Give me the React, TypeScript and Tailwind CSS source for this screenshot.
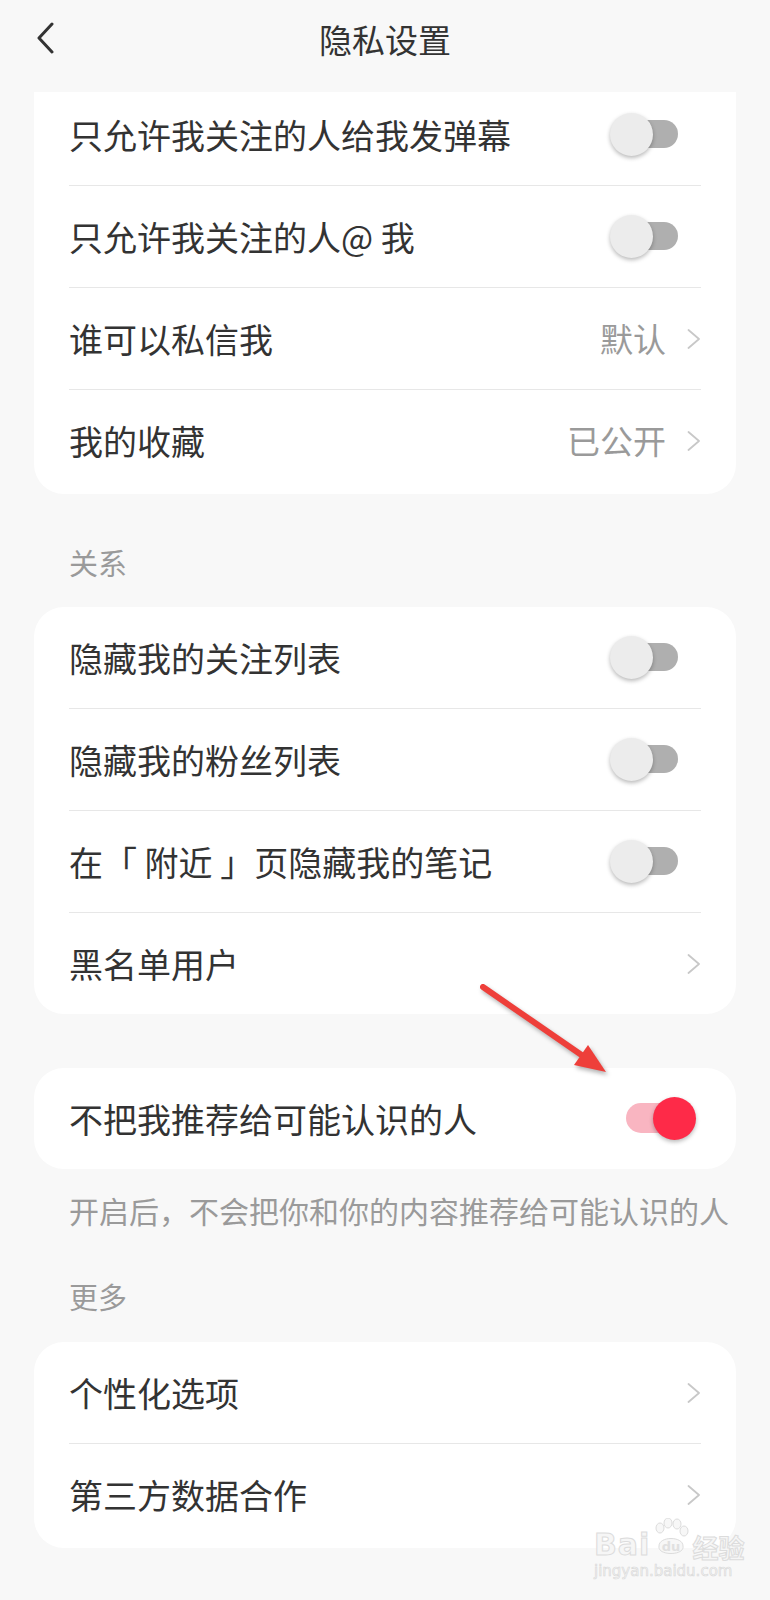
import React from "react";

type Row = {
  label: string;
  toggle?: boolean;
  on?: boolean;
  value?: string;
  link?: boolean;
};

const font = "font-['Noto_Sans_CJK_SC','Noto_Sans',sans-serif]";

function Switch({ on }: { on?: boolean }) {
  return (
    <div className="relative h-[43px] w-[86px] shrink-0">
      {on ? (
        <>
          <div className="absolute left-[16px] top-[6px] h-[30px] w-[60px] rounded-full bg-[#f9b5c1]" />
          <div className="absolute left-[43px] top-0 h-[43px] w-[43px] rounded-full bg-[#fe2a48] shadow-[0_2px_4px_rgba(0,0,0,0.28)]" />
        </>
      ) : (
        <>
          <div className="absolute left-[8px] top-[7px] h-[28px] w-[60px] rounded-full bg-[#afafaf]" />
          <div className="absolute left-0 top-0 h-[43px] w-[43px] rounded-full bg-[#ececec] shadow-[0_2px_4px_rgba(0,0,0,0.28)]" />
        </>
      )}
    </div>
  );
}

function Chevron() {
  return (
    <svg width="14" height="20" viewBox="0 0 14 20" className="shrink-0">
      <polyline
        points="1.5,1 12,10 1.5,19"
        fill="none"
        stroke="#c8c8c8"
        strokeWidth="1.8"
        strokeLinecap="round"
        strokeLinejoin="round"
      />
    </svg>
  );
}

function SettingRow({ row, className = "h-[101px]" }: { row: Row; className?: string }) {
  return (
    <div
      className={`flex items-center justify-between pl-[35px] ${
        row.toggle ? "pr-[40px]" : "pr-[35px]"
      } ${className}`}
    >
      <span className="text-[34px] leading-none text-[#333333]">{row.label}</span>
      {row.toggle ? (
        <Switch on={row.on} />
      ) : (
        <div className="flex items-center gap-[21px]">
          {row.value && (
            <span className="text-[33px] leading-none text-[#9a9a9a]">{row.value}</span>
          )}
          <Chevron />
        </div>
      )}
    </div>
  );
}

function Card({
  rows,
  firstCut,
  tallLast,
}: {
  rows: Row[];
  firstCut?: boolean;
  tallLast?: boolean;
}) {
  return (
    <div
      className={`mx-[34px] bg-white ${firstCut ? "rounded-b-[30px]" : "rounded-[30px]"}`}
    >
      {rows.map((row, i) => {
        let h = "h-[101px]";
        if (firstCut && i === 0) h = "h-[93px] pb-[8px]";
        else if (tallLast && i === rows.length - 1) h = "h-[104px] pb-[3px]";
        return (
          <div key={row.label}>
            {i > 0 && <div className="mx-[35px] h-px bg-[#e7e7e7]" />}
            <SettingRow row={row} className={h} />
          </div>
        );
      })}
    </div>
  );
}

function SectionLabel({ text }: { text: string }) {
  return <div className="pl-[69px] text-[29px] leading-[28px] text-[#9a9a9a]">{text}</div>;
}

function RedArrow() {
  return (
    <svg
      width="150"
      height="110"
      viewBox="0 0 150 110"
      className="pointer-events-none absolute left-[470px] top-[975px] drop-shadow-[2px_3px_2px_rgba(0,0,0,0.3)]"
    >
      <line x1="13" y1="12" x2="113" y2="81" stroke="#ee3f3a" strokeWidth="6" strokeLinecap="round" />
      <polygon points="136,97 104,90 118,70" fill="#ee3f3a" />
    </svg>
  );
}

function Watermark() {
  return (
    <div className="pointer-events-none absolute left-[594px] top-[1518px] flex flex-col items-start">
      <div className="flex items-end">
        <span className="text-[30px] font-bold leading-none tracking-[1px] text-[#f6f6f6] [-webkit-text-stroke:1px_#dcdcdc] font-['DejaVu_Sans',sans-serif]">
          Bai
        </span>
        <svg width="40" height="42" viewBox="0 0 40 42" className="mx-[1px]">
          <g fill="#f7f7f7" stroke="#dcdcdc" strokeWidth="1">
            <ellipse cx="9" cy="10" rx="4" ry="5" />
            <ellipse cx="17" cy="5" rx="4" ry="5" />
            <ellipse cx="26" cy="6" rx="4" ry="5" />
            <ellipse cx="33" cy="13" rx="4" ry="5" />
            <path d="M8 28 C8 18 32 18 32 28 C34 38 6 38 8 28 Z" />
          </g>
          <text
            x="20"
            y="33"
            textAnchor="middle"
            fontSize="13"
            fontWeight="bold"
            fill="#e0e0e0"
            fontFamily="DejaVu Sans, sans-serif"
          >
            du
          </text>
        </svg>
        <span className="text-[26px] font-bold leading-none text-[#f6f6f6] [-webkit-text-stroke:1px_#dcdcdc]">
          经验
        </span>
      </div>
      <span className="mt-[4px] text-[15px] leading-none text-[#f4f4f4] [-webkit-text-stroke:0.6px_#d8d8d8] font-['DejaVu_Sans',sans-serif]">
        jingyan.baidu.com
      </span>
    </div>
  );
}

export default function App() {
  const top: Row[] = [
    { label: "只允许我关注的人给我发弹幕", toggle: true },
    { label: "只允许我关注的人@ 我", toggle: true },
    { label: "谁可以私信我", value: "默认", link: true },
    { label: "我的收藏", value: "已公开", link: true },
  ];
  const relation: Row[] = [
    { label: "隐藏我的关注列表", toggle: true },
    { label: "隐藏我的粉丝列表", toggle: true },
    { label: "在「 附近 」页隐藏我的笔记", toggle: true },
    { label: "黑名单用户", link: true },
  ];
  const more: Row[] = [
    { label: "个性化选项", link: true },
    { label: "第三方数据合作", link: true },
  ];

  return (
    <div className={`relative min-h-[1600px] w-[770px] bg-[#f8f8f8] ${font}`}>
      {/* header */}
      <div className="relative flex h-[78px] items-center justify-center">
        <svg
          width="20"
          height="32"
          viewBox="0 0 20 32"
          className="absolute left-[36px] top-[22px]"
        >
          <polyline
            points="16,2 3,16 16,30"
            fill="none"
            stroke="#333333"
            strokeWidth="3"
            strokeLinecap="round"
            strokeLinejoin="round"
          />
        </svg>
        <h1 className="text-[33px] font-normal leading-none text-[#333333]">隐私设置</h1>
      </div>

      <div className="pt-[14px]">
        <Card rows={top} firstCut tallLast />
      </div>

      <div className="flex h-[113px] items-end pb-[31px]">
        <SectionLabel text="关系" />
      </div>
      <Card rows={relation} />

      <div className="mt-[54px]">
        <Card rows={[{ label: "不把我推荐给可能认识的人", toggle: true, on: true }]} />
      </div>

      <p className="mt-[26px] pl-[69px] text-[30px] leading-[30px] text-[#9a9a9a]">
        开启后，不会把你和你的内容推荐给可能认识的人
      </p>

      <div className="mt-[57px]">
        <SectionLabel text="更多" />
      </div>

      <div className="mt-[32px]">
        <Card rows={more} tallLast />
      </div>

      <RedArrow />
      <Watermark />
    </div>
  );
}
